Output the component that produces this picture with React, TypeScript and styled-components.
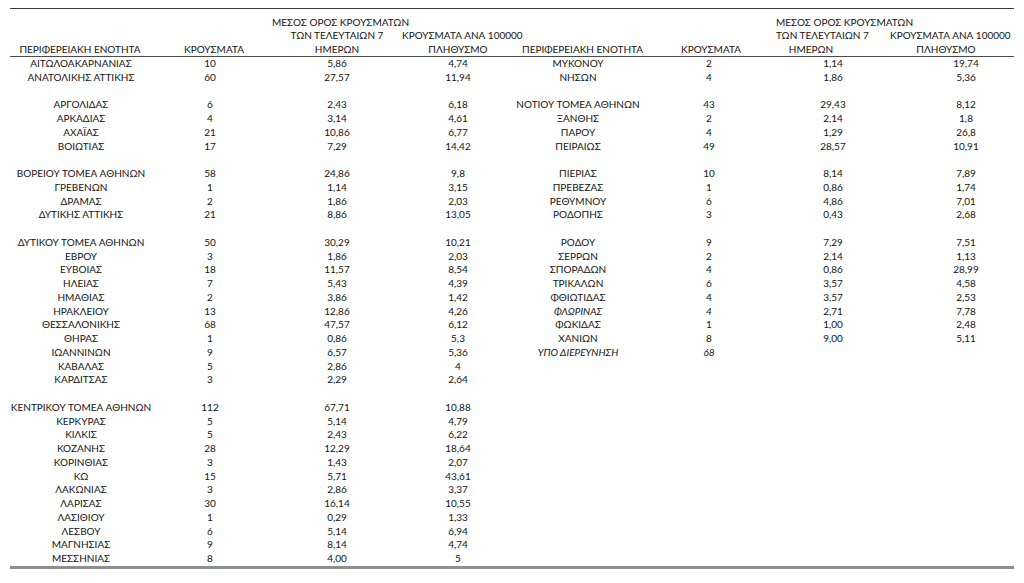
import React from 'react';
import styled, { createGlobalStyle } from 'styled-components';

type Row = [string, string, string, string] | null;

interface ICell {
  text: string;
  italic?: boolean;
}

interface IColumn {
  width: number;
  headShift: number;
  dataShift: number;
}

const LEFT: Row[] = [
  ['ΑΙΤΩΛΟΑΚΑΡΝΑΝΙΑΣ', '10', '5,86', '4,74'],
  ['ΑΝΑΤΟΛΙΚΗΣ ΑΤΤΙΚΗΣ', '60', '27,57', '11,94'],
  null,
  ['ΑΡΓΟΛΙΔΑΣ', '6', '2,43', '6,18'],
  ['ΑΡΚΑΔΙΑΣ', '4', '3,14', '4,61'],
  ['ΑΧΑΪΑΣ', '21', '10,86', '6,77'],
  ['ΒΟΙΩΤΙΑΣ', '17', '7,29', '14,42'],
  null,
  ['ΒΟΡΕΙΟΥ ΤΟΜΕΑ ΑΘΗΝΩΝ', '58', '24,86', '9,8'],
  ['ΓΡΕΒΕΝΩΝ', '1', '1,14', '3,15'],
  ['ΔΡΑΜΑΣ', '2', '1,86', '2,03'],
  ['ΔΥΤΙΚΗΣ ΑΤΤΙΚΗΣ', '21', '8,86', '13,05'],
  null,
  ['ΔΥΤΙΚΟΥ ΤΟΜΕΑ ΑΘΗΝΩΝ', '50', '30,29', '10,21'],
  ['ΕΒΡΟΥ', '3', '1,86', '2,03'],
  ['ΕΥΒΟΙΑΣ', '18', '11,57', '8,54'],
  ['ΗΛΕΙΑΣ', '7', '5,43', '4,39'],
  ['ΗΜΑΘΙΑΣ', '2', '3,86', '1,42'],
  ['ΗΡΑΚΛΕΙΟΥ', '13', '12,86', '4,26'],
  ['ΘΕΣΣΑΛΟΝΙΚΗΣ', '68', '47,57', '6,12'],
  ['ΘΗΡΑΣ', '1', '0,86', '5,3'],
  ['ΙΩΑΝΝΙΝΩΝ', '9', '6,57', '5,36'],
  ['ΚΑΒΑΛΑΣ', '5', '2,86', '4'],
  ['ΚΑΡΔΙΤΣΑΣ', '3', '2,29', '2,64'],
  null,
  ['ΚΕΝΤΡΙΚΟΥ ΤΟΜΕΑ ΑΘΗΝΩΝ', '112', '67,71', '10,88'],
  ['ΚΕΡΚΥΡΑΣ', '5', '5,14', '4,79'],
  ['ΚΙΛΚΙΣ', '5', '2,43', '6,22'],
  ['ΚΟΖΑΝΗΣ', '28', '12,29', '18,64'],
  ['ΚΟΡΙΝΘΙΑΣ', '3', '1,43', '2,07'],
  ['ΚΩ', '15', '5,71', '43,61'],
  ['ΛΑΚΩΝΙΑΣ', '3', '2,86', '3,37'],
  ['ΛΑΡΙΣΑΣ', '30', '16,14', '10,55'],
  ['ΛΑΣΙΘΙΟΥ', '1', '0,29', '1,33'],
  ['ΛΕΣΒΟΥ', '6', '5,14', '6,94'],
  ['ΜΑΓΝΗΣΙΑΣ', '9', '8,14', '4,74'],
  ['ΜΕΣΣΗΝΙΑΣ', '8', '4,00', '5'],
];

const RIGHT: Row[] = [
  ['ΜΥΚΟΝΟΥ', '2', '1,14', '19,74'],
  ['ΝΗΣΩΝ', '4', '1,86', '5,36'],
  null,
  ['ΝΟΤΙΟΥ ΤΟΜΕΑ ΑΘΗΝΩΝ', '43', '29,43', '8,12'],
  ['ΞΑΝΘΗΣ', '2', '2,14', '1,8'],
  ['ΠΑΡΟΥ', '4', '1,29', '26,8'],
  ['ΠΕΙΡΑΙΩΣ', '49', '28,57', '10,91'],
  null,
  ['ΠΙΕΡΙΑΣ', '10', '8,14', '7,89'],
  ['ΠΡΕΒΕΖΑΣ', '1', '0,86', '1,74'],
  ['ΡΕΘΥΜΝΟΥ', '6', '4,86', '7,01'],
  ['ΡΟΔΟΠΗΣ', '3', '0,43', '2,68'],
  null,
  ['ΡΟΔΟΥ', '9', '7,29', '7,51'],
  ['ΣΕΡΡΩΝ', '2', '2,14', '1,13'],
  ['ΣΠΟΡΑΔΩΝ', '4', '0,86', '28,99'],
  ['ΤΡΙΚΑΛΩΝ', '6', '3,57', '4,58'],
  ['ΦΘΙΩΤΙΔΑΣ', '4', '3,57', '2,53'],
  ['ΦΛΩΡΙΝΑΣ', '4', '2,71', '7,78'],
  ['ΦΩΚΙΔΑΣ', '1', '1,00', '2,48'],
  ['ΧΑΝΙΩΝ', '8', '9,00', '5,11'],
  ['ΥΠΟ ΔΙΕΡΕΥΝΗΣΗ', '68', '', ''],
];

// cells that are set in italics in the source sheet
const ITALIC = new Set(['ΦΛΩΡΙΝΑΣ', 'ΥΠΟ ΔΙΕΡΕΥΝΗΣΗ']);

// shift > 0 pushes the centred text right, < 0 pulls it left
const COLUMNS: IColumn[] = [
  { width: 142, headShift: -1, dataShift: 0 },
  { width: 120, headShift: 2, dataShift: -2 },
  { width: 130, headShift: 0, dataShift: 0 },
  { width: 112, headShift: 0, dataShift: 0 },
  { width: 128, headShift: 4, dataShift: 0 },
  { width: 134, headShift: 2, dataShift: 0 },
  { width: 114, headShift: -22, dataShift: 0 },
  { width: 124, headShift: -6, dataShift: 14 },
];

const toCells = (row: Row | undefined): ICell[] => {
  if (!row) return [{ text: '' }, { text: '' }, { text: '' }, { text: '' }];
  const italic = ITALIC.has(row[0]);
  return row.map((text, i) => ({ text, italic: italic && i < 2 }));
};

const HEADINGS = [
  ['ΠΕΡΙΦΕΡΕΙΑΚΗ ΕΝΟΤΗΤΑ'],
  ['ΚΡΟΥΣΜΑΤΑ'],
  ['ΜΕΣΟΣ ΟΡΟΣ ΚΡΟΥΣΜΑΤΩΝ', 'ΤΩΝ ΤΕΛΕΥΤΑΙΩΝ 7', 'ΗΜΕΡΩΝ'],
  ['ΚΡΟΥΣΜΑΤΑ ΑΝΑ 100000', 'ΠΛΗΘΥΣΜΟ'],
];

function App() {
  const rows = LEFT.map((row, i) => [...toCells(row), ...toCells(RIGHT[i])]);

  return (
    <>
      <GlobalStyle />
      <SPage>
        <STable>
          <colgroup>
            {COLUMNS.map((col, i) => (
              <col key={i} style={{ width: col.width }} />
            ))}
          </colgroup>
          <thead>
            <tr>
              {COLUMNS.map((col, i) => (
                <SHeadCell key={i} $shift={col.headShift}>
                  {HEADINGS[i % 4].map((line, j) => (
                    <SHeadLine key={j}>{line}</SHeadLine>
                  ))}
                </SHeadCell>
              ))}
            </tr>
          </thead>
          <tbody>
            {rows.map((cells, r) => (
              <SRow key={r}>
                {cells.map((cell, c) => (
                  <SCell key={c} $italic={cell.italic} $shift={COLUMNS[c].dataShift}>
                    {cell.text}
                  </SCell>
                ))}
              </SRow>
            ))}
          </tbody>
        </STable>
      </SPage>
    </>
  );
}

const shiftPadding = (shift: number) =>
  shift >= 0 ? `0 0 0 ${shift * 2}px` : `0 ${-shift * 2}px 0 0`;

const GlobalStyle = createGlobalStyle`
  html, body {
    margin: 0;
    padding: 0;
    background: #ffffff;
  }
  body {
    font-family: Lato, "Open Sans", "Noto Sans", sans-serif;
    color: #141414;
  }
`;

const SPage = styled.div`
  width: 1024px;
  height: 583px;
  padding: 8px 0 0 10px;
  box-sizing: border-box;
`;

const STable = styled.table`
  table-layout: fixed;
  width: 1004px;
  border-collapse: collapse;
  border-top: 1px solid #3a3a3a;
  border-bottom: 3px solid #8e8e8e;
  font-size: 10px;
`;

const SHeadCell = styled.th<{ $shift: number }>`
  height: 47px;
  padding: ${({ $shift }) => shiftPadding($shift)};
  vertical-align: bottom;
  text-align: center;
  font-weight: 400;
  border-bottom: 1px solid #4a4a4a;
  white-space: nowrap;
  overflow: visible;
`;

const SHeadLine = styled.div`
  line-height: 13.5px;
`;

const SRow = styled.tr`
  height: 13.75px;
`;

const SCell = styled.td<{ $italic?: boolean; $shift: number }>`
  padding: ${({ $shift }) => shiftPadding($shift)};
  height: 13.75px;
  line-height: 13.75px;
  text-align: center;
  white-space: nowrap;
  font-style: ${({ $italic }) => ($italic ? 'italic' : 'normal')};
`;

export default App;
